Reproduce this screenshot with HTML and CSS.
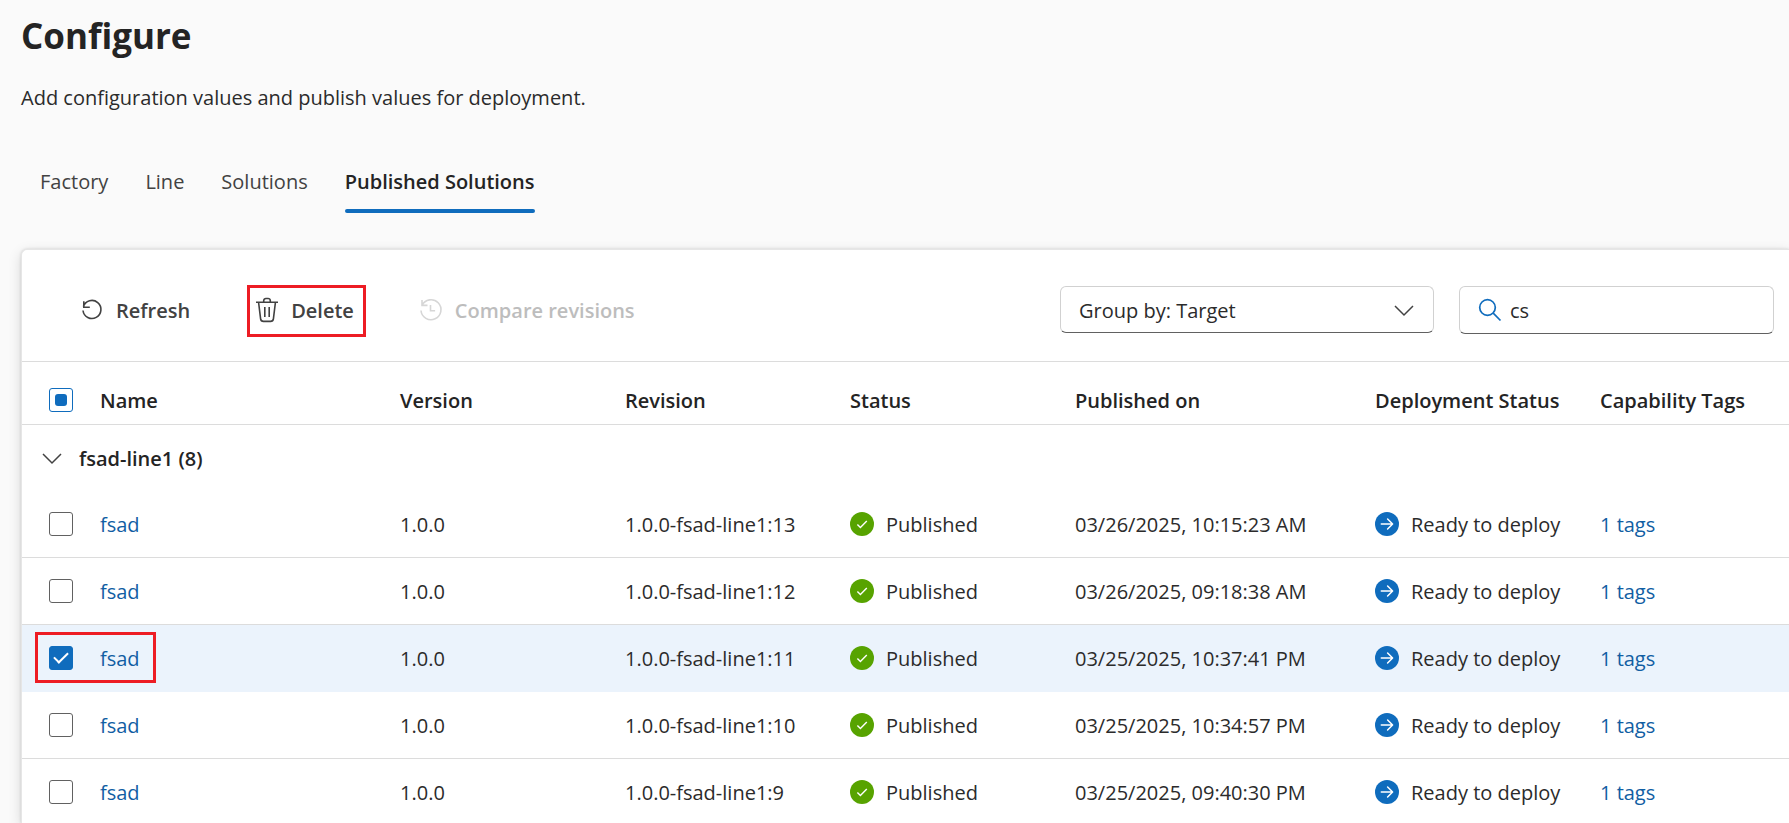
FILE: index.html
```html
<!DOCTYPE html>
<html lang="en">
<head>
<meta charset="utf-8">
<title>Configure</title>
<link rel="stylesheet" href="styles.css">
</head>
<body>
<svg class="sprite" aria-hidden="true">
  <symbol id="i-published" viewBox="0 0 24 24"><circle cx="12" cy="12" r="12" fill="#57a300"/><path d="M7.4 12.6l3 3 6.4-6.6" fill="none" stroke="#fff" stroke-width="1.4"/></symbol>
  <symbol id="i-ready" viewBox="0 0 24 24"><circle cx="12" cy="12" r="12" fill="#0f6cbd"/><path d="M6.3 12h11M12.6 7l5 5-5 5" fill="none" stroke="#fff" stroke-width="1.5" stroke-linecap="round" stroke-linejoin="round"/></symbol>
</svg>
<header class="page-head">
  <h1 class="title">Configure</h1>
  <p class="subtitle">Add configuration values and publish values for deployment.</p>
  <nav class="tabs">
    <a class="tab" href="#factory">Factory</a>
    <a class="tab" href="#line">Line</a>
    <a class="tab" href="#solutions">Solutions</a>
    <a class="tab tab-active" href="#published" aria-current="page">Published Solutions</a>
  </nav>
</header>
<main class="card">
  <div class="toolbar">
    <div class="actions">
      <button class="action" type="button">
        <svg class="icon" viewBox="0 0 24 24"><path d="M3.4 8.6A9 9 0 1 1 3 12.5M3.8 3.2v6h6" /></svg>
        Refresh
      </button>
      <button class="action action-marked" type="button">
        <svg class="icon icon-trash" viewBox="0 0 24 26"><path d="M1 5.2h22M8.7 5V3.7a2.2 2.2 0 0 1 2.2-2.2h2.2a2.2 2.2 0 0 1 2.2 2.2V5M3.6 5.5l2 16.4a2.9 2.9 0 0 0 2.9 2.5h7a2.9 2.9 0 0 0 2.9-2.5l2-16.4M9.8 10v10M14.2 10v10"/></svg>
        Delete
      </button>
      <button class="action" type="button" disabled>
        <svg class="icon icon-history" viewBox="0 0 24 24"><path d="M3 7.3A10 10 0 1 1 2 12.5M3 2v5.4h5.5M11.5 7v5.8h4.6"/></svg>
        Compare revisions
      </button>
    </div>
    <div class="filters">
      <div class="dropdown">
        <select class="field select" aria-label="Group by"><option>Group by: Target</option></select>
        <svg class="chevron dropdown-chevron" viewBox="0 0 20 12"><path d="M1 1l9 9 9-9"/></svg>
      </div>
      <label class="field search">
        <svg class="search-icon" viewBox="0 0 24 24"><circle cx="9.5" cy="9.5" r="7.8"/><path d="M15.2 15.2l7.3 7.3"/></svg>
        <input class="search-input" type="text" value="cs" aria-label="Search">
      </label>
    </div>
  </div>
  <table class="grid">
    <colgroup><col class="c-select"><col class="c-wide"><col class="c-mid"><col class="c-mid"><col class="c-mid"><col class="c-wide"><col class="c-mid"><col></colgroup>
    <thead>
      <tr><th class="pick"><input class="check check-mixed" type="checkbox" aria-label="Select all"></th><th>Name</th><th>Version</th><th>Revision</th><th>Status</th><th>Published on</th><th>Deployment Status</th><th>Capability Tags</th></tr>
    </thead>
    <tbody>
      <tr class="group"><td colspan="8"><button class="group-toggle" type="button"><svg class="chevron" viewBox="0 0 20 12"><path d="M1 1l9 9 9-9"/></svg>fsad-line1 (8)</button></td></tr>
      <tr><td class="pick"><input class="check" type="checkbox" aria-label="Select fsad 13"></td><td><a class="link" href="#r13">fsad</a></td><td>1.0.0</td><td>1.0.0-fsad-line1:13</td><td><span class="state"><svg class="badge"><use href="#i-published"/></svg>Published</span></td><td>03/26/2025, 10:15:23 AM</td><td><span class="state"><svg class="badge"><use href="#i-ready"/></svg>Ready to deploy</span></td><td><a class="link" href="#t13">1 tags</a></td></tr>
      <tr><td class="pick"><input class="check" type="checkbox" aria-label="Select fsad 12"></td><td><a class="link" href="#r12">fsad</a></td><td>1.0.0</td><td>1.0.0-fsad-line1:12</td><td><span class="state"><svg class="badge"><use href="#i-published"/></svg>Published</span></td><td>03/26/2025, 09:18:38 AM</td><td><span class="state"><svg class="badge"><use href="#i-ready"/></svg>Ready to deploy</span></td><td><a class="link" href="#t12">1 tags</a></td></tr>
      <tr class="selected"><td class="pick"><input class="check" type="checkbox" checked aria-label="Select fsad 11"><span class="marker"></span></td><td><a class="link" href="#r11">fsad</a></td><td>1.0.0</td><td>1.0.0-fsad-line1:11</td><td><span class="state"><svg class="badge"><use href="#i-published"/></svg>Published</span></td><td>03/25/2025, 10:37:41 PM</td><td><span class="state"><svg class="badge"><use href="#i-ready"/></svg>Ready to deploy</span></td><td><a class="link" href="#t11">1 tags</a></td></tr>
      <tr><td class="pick"><input class="check" type="checkbox" aria-label="Select fsad 10"></td><td><a class="link" href="#r10">fsad</a></td><td>1.0.0</td><td>1.0.0-fsad-line1:10</td><td><span class="state"><svg class="badge"><use href="#i-published"/></svg>Published</span></td><td>03/25/2025, 10:34:57 PM</td><td><span class="state"><svg class="badge"><use href="#i-ready"/></svg>Ready to deploy</span></td><td><a class="link" href="#t10">1 tags</a></td></tr>
      <tr><td class="pick"><input class="check" type="checkbox" aria-label="Select fsad 9"></td><td><a class="link" href="#r9">fsad</a></td><td>1.0.0</td><td>1.0.0-fsad-line1:9</td><td><span class="state"><svg class="badge"><use href="#i-published"/></svg>Published</span></td><td>03/25/2025, 09:40:30 PM</td><td><span class="state"><svg class="badge"><use href="#i-ready"/></svg>Ready to deploy</span></td><td><a class="link" href="#t9">1 tags</a></td></tr>
    </tbody>
  </table>
</main>
</body>
</html>
```
FILE: styles.css
```css
* { box-sizing: border-box; }

body {
  margin: 0;
  height: 100vh;
  overflow: hidden;
  display: flex;
  flex-direction: column;
  background: #fafafa;
  color: #2b2b2b;
  font: 20px/30px "Open Sans", "Noto Sans", sans-serif;
}

button, input, select { font: inherit; color: inherit; }
svg { flex: none; }
.sprite { position: absolute; width: 0; height: 0; }

.page-head { padding: 12px 21px 0; }
.title { margin: 0; font-size: 35px; line-height: 48px; font-weight: 700; color: #242424; }
.subtitle { margin: 23px 0 0; }

.tabs { display: flex; gap: 37px; margin-top: 47px; padding: 0 19px; }
.tab { padding: 7px 0 12px; color: #424242; text-decoration: none; border-bottom: 4px solid transparent; }
.tab-active { position: relative; font-weight: 600; color: #242424; }
.tab-active::after {
  content: "";
  position: absolute;
  left: 0; right: 0; bottom: -4px;
  height: 4px;
  border-radius: 2px;
  background: #0f6cbd;
}

.card {
  flex: 1;
  min-height: 0;
  margin: 36px 0 0 21px;
  border: 1px solid #e6e6e6;
  border-width: 1px 0 0 1px;
  border-radius: 6px 0 0 0;
  background: #fff;
  box-shadow: 0 0 3px rgba(0, 0, 0, .14), 0 4px 14px rgba(0, 0, 0, .14);
}

.toolbar {
  display: flex;
  justify-content: space-between;
  align-items: flex-start;
  padding: 36px 15px 24px 50px;
  border-bottom: 1px solid #dcdcdc;
}
.actions { display: flex; gap: 45px; }
.action {
  display: flex;
  align-items: center;
  gap: 12px;
  height: 52px;
  margin-top: -1px;
  padding: 0 9px 0 5px;
  border: 3px solid transparent;
  background: none;
  font-weight: 600;
  color: #424242;
}
.action-marked { border-color: #ed1c24; }
.action:disabled { color: #bdbdbd; }
.icon { width: 24px; height: 24px; margin-bottom: 2px; fill: none; stroke: currentColor; stroke-width: 1.6; }
.icon-trash { height: 26px; }
.icon-history { color: #d6d6d6; }

.filters { display: flex; gap: 25px; }
.field {
  height: 48px;
  border: 1px solid #d1d1d1;
  border-bottom-color: #616161;
  border-radius: 6px;
  background: #fff;
}
.dropdown { position: relative; }
.select { width: 374px; height: 47px; padding: 2px 18px 0; appearance: none; }
.dropdown-chevron { position: absolute; right: 20px; top: 19px; }
.chevron { width: 20px; height: 12px; fill: none; stroke: #424242; stroke-width: 1.5; }
.search { display: flex; align-items: center; gap: 8px; width: 315px; padding: 0 18px; }
.search-icon { width: 24px; height: 24px; fill: none; stroke: #0f6cbd; stroke-width: 1.7; }
.search-input { flex: 1; min-width: 0; padding: 2px 0 0; border: 0; background: none; outline: 0; }

.grid { width: 100%; table-layout: fixed; border-collapse: separate; border-spacing: 0; }
.c-select { width: 78px; }
.c-wide { width: 300px; }
.c-mid { width: 225px; }
.grid th, .grid td { padding: 2px 0 0; text-align: left; white-space: nowrap; border-bottom: 1px solid #dcdcdc; }
.grid th { height: 63px; padding-top: 16px; font-weight: 600; color: #242424; }
.grid td { height: 67px; }
.grid .pick { position: relative; padding: 0 0 0 27px; }
.grid th.pick { padding-top: 14px; }
.grid .group td { height: 66px; border-bottom: 0; }
.selected td { background: #ebf3fc; }
.grid .selected td { border-bottom-color: #ebf3fc; }

.group-toggle {
  display: flex;
  align-items: center;
  gap: 17px;
  padding: 0 20px;
  border: 0;
  background: none;
  font-weight: 600;
  color: #242424;
}

.link { color: #115ea3; text-decoration: none; }
.state { display: flex; align-items: center; gap: 12px; }
.badge { width: 24px; height: 24px; margin-bottom: 2px; }

.check {
  display: grid;
  place-items: center;
  width: 24px;
  height: 24px;
  margin: 0;
  appearance: none;
  border: 1px solid #616161;
  border-radius: 3px;
  background: #fff;
}
.check-mixed { border-color: #0f6cbd; }
.check-mixed::before { content: ""; width: 12px; height: 12px; border-radius: 3px; background: #0f6cbd; }
.check:checked { border-color: #0f6cbd; background: #0f6cbd; }
.check:checked::before {
  content: "";
  width: 12px;
  height: 6px;
  margin-bottom: 4px;
  border: solid #fff;
  border-width: 0 0 2px 2px;
  transform: rotate(-45deg);
}

.marker {
  position: absolute;
  left: 13px;
  top: 7px;
  width: 121px;
  height: 51px;
  border: 3px solid #ed1c24;
  pointer-events: none;
}
```
